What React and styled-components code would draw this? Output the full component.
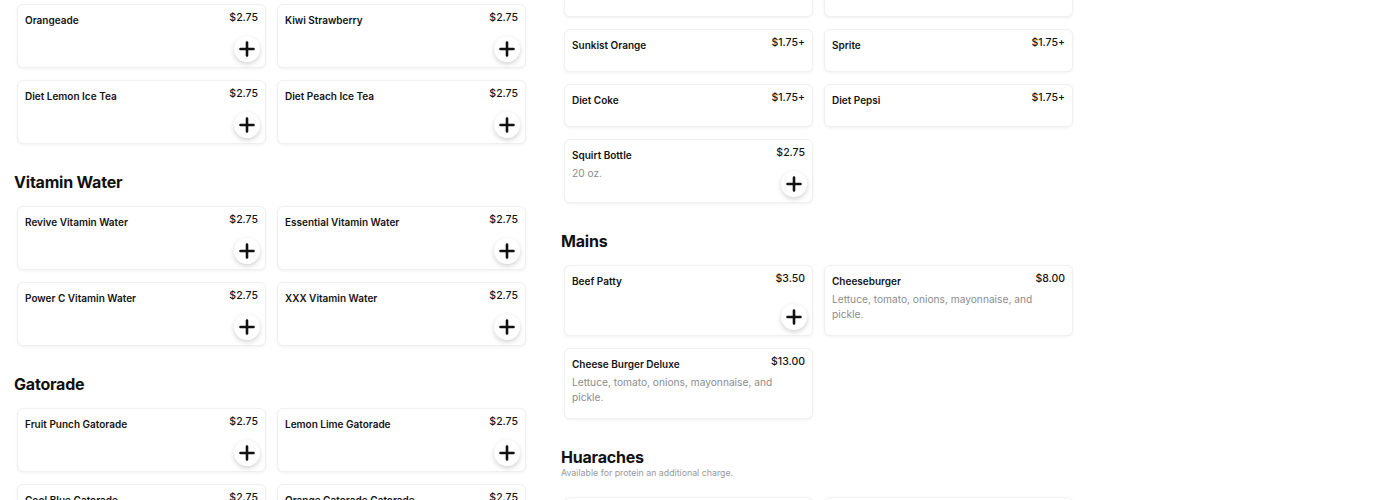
import React from 'react';
import styled, { createGlobalStyle } from 'styled-components';

const GlobalStyle = createGlobalStyle`
  body {
    margin: 0;
    background: #fff;
    font-family: Inter, 'Liberation Sans', sans-serif;
    color: #141414;
    overflow: hidden;
  }
`;

const PlusIcon = () => (
  <svg width="16" height="16" viewBox="0 0 16 16">
    <path d="M8 1.5v13M1.5 8h13" stroke="#111" strokeWidth="2.6" strokeLinecap="round" />
  </svg>
);

const MENU = {
  left: [
    {
      items: [
        { name: 'Orangeade', price: '$2.75', add: true },
        { name: 'Kiwi Strawberry', price: '$2.75', add: true },
        { name: 'Diet Lemon Ice Tea', price: '$2.75', add: true },
        { name: 'Diet Peach Ice Tea', price: '$2.75', add: true },
      ],
    },
    {
      title: 'Vitamin Water',
      items: [
        { name: 'Revive Vitamin Water', price: '$2.75', add: true },
        { name: 'Essential Vitamin Water', price: '$2.75', add: true },
        { name: 'Power C Vitamin Water', price: '$2.75', add: true },
        { name: 'XXX Vitamin Water', price: '$2.75', add: true },
      ],
    },
    {
      title: 'Gatorade',
      items: [
        { name: 'Fruit Punch Gatorade', price: '$2.75', add: true },
        { name: 'Lemon Lime Gatorade', price: '$2.75', add: true },
        { name: 'Cool Blue Gatorade', price: '$2.75', add: true },
        { name: 'Orange Gatorade Gatorade', price: '$2.75', add: true },
      ],
    },
  ],
  right: [
    {
      items: [
        { name: 'Coke', price: '$1.75+' },
        { name: 'Pepsi', price: '$1.75+' },
        { name: 'Sunkist Orange', price: '$1.75+' },
        { name: 'Sprite', price: '$1.75+' },
        { name: 'Diet Coke', price: '$1.75+' },
        { name: 'Diet Pepsi', price: '$1.75+' },
        { name: 'Squirt Bottle', price: '$2.75', desc: '20 oz.', add: true },
      ],
    },
    {
      title: 'Mains',
      items: [
        { name: 'Beef Patty', price: '$3.50', add: true },
        {
          name: 'Cheeseburger',
          price: '$8.00',
          desc: 'Lettuce, tomato, onions, mayonnaise, and pickle.',
        },
        {
          name: 'Cheese Burger Deluxe',
          price: '$13.00',
          desc: 'Lettuce, tomato, onions, mayonnaise, and pickle.',
        },
      ],
    },
    {
      title: 'Huaraches',
      subtitle: 'Available for protein an additional charge.',
      items: [
        { name: 'Chicken Huarache', price: '$12.00', add: true },
        { name: 'Steak Huarache', price: '$13.00', add: true },
      ],
    },
  ],
};

const MenuCard = ({ item }) => (
  <Card>
    <CardHead>
      <ItemName>{item.name}</ItemName>
      <Price>{item.price}</Price>
    </CardHead>
    <CardBody>
      <Desc>{item.desc}</Desc>
      {item.add ? (
        <AddButton aria-label="Add">
          <PlusIcon />
        </AddButton>
      ) : (
        <Spacer hasDesc={!!item.desc} />
      )}
    </CardBody>
  </Card>
);

const MenuSection = ({ section }) => (
  <Section>
    {section.title && <SectionTitle>{section.title}</SectionTitle>}
    {section.subtitle && <SectionSub>{section.subtitle}</SectionSub>}
    <CardGrid hasHead={!!section.title} hasSub={!!section.subtitle}>
      {section.items.map((item) => (
        <MenuCard key={item.name} item={item} />
      ))}
    </CardGrid>
  </Section>
);

export default function App() {
  return (
    <Page>
      <GlobalStyle />
      <Column>
        {MENU.left.map((section, idx) => (
          <MenuSection key={idx} section={section} />
        ))}
      </Column>
      <Column offset={-30}>
        {MENU.right.map((section, idx) => (
          <MenuSection key={idx} section={section} />
        ))}
      </Column>
    </Page>
  );
}

const Page = styled.div`
  display: flex;
  align-items: flex-start;
  gap: 32px;
  padding: 4px 0 0 14px;
  height: 496px;
  overflow: hidden;
`;

const Column = styled.div`
  width: 515px;
  display: flex;
  flex-direction: column;
  margin-top: ${(props) => props.offset || 0}px;
`;

const Section = styled.section`
  & + & {
    margin-top: 27px;
  }
`;

const SectionTitle = styled.h2`
  margin: 0;
  font-size: 16px;
  line-height: 22px;
  font-weight: 700;
  letter-spacing: -0.2px;
  color: #111;
`;

const SectionSub = styled.div`
  font-size: 8.8px;
  line-height: 10px;
  color: #999;
`;

const CardGrid = styled.div`
  display: grid;
  grid-template-columns: 1fr 1fr;
  column-gap: 11px;
  row-gap: 12px;
  padding: 0 3px;
  margin-top: ${(props) => (props.hasSub ? 19 : props.hasHead ? 13 : 0)}px;
`;

const Card = styled.div`
  display: flex;
  flex-direction: column;
  padding: 8px 7px 5px;
  background: #fff;
  border: 1px solid #f0f0f0;
  border-radius: 6px;
  box-shadow: 0 1px 3px rgba(0, 0, 0, 0.06);
`;

const CardHead = styled.div`
  display: flex;
  justify-content: space-between;
  align-items: flex-start;
  height: 15px;
`;

const ItemName = styled.div`
  padding-top: 1px;
  font-size: 10px;
  line-height: 12px;
  font-weight: 600;
  color: #141414;
`;

const Price = styled.div`
  margin-top: -1px;
  font-size: 10.5px;
  line-height: 12px;
  font-weight: 500;
  color: #141414;
`;

const CardBody = styled.div`
  flex: 1;
  display: flex;
  justify-content: space-between;
  align-items: flex-end;
`;

const Desc = styled.div`
  align-self: flex-start;
  margin: 3px 0 8px;
  max-width: 215px;
  font-size: 10.2px;
  line-height: 15px;
  color: #8c8c8c;
  &:empty {
    margin: 0;
  }
`;

const AddButton = styled.button`
  flex-shrink: 0;
  width: 26px;
  height: 26px;
  margin-top: 8px;
  margin-right: -2px;
  padding: 0;
  display: flex;
  align-items: center;
  justify-content: center;
  border: none;
  border-radius: 50%;
  background: #fff;
  box-shadow: 0 2px 5px rgba(0, 0, 0, 0.18);
  cursor: pointer;
`;

const Spacer = styled.div`
  height: ${(props) => (props.hasDesc ? 0 : 13)}px;
`;
